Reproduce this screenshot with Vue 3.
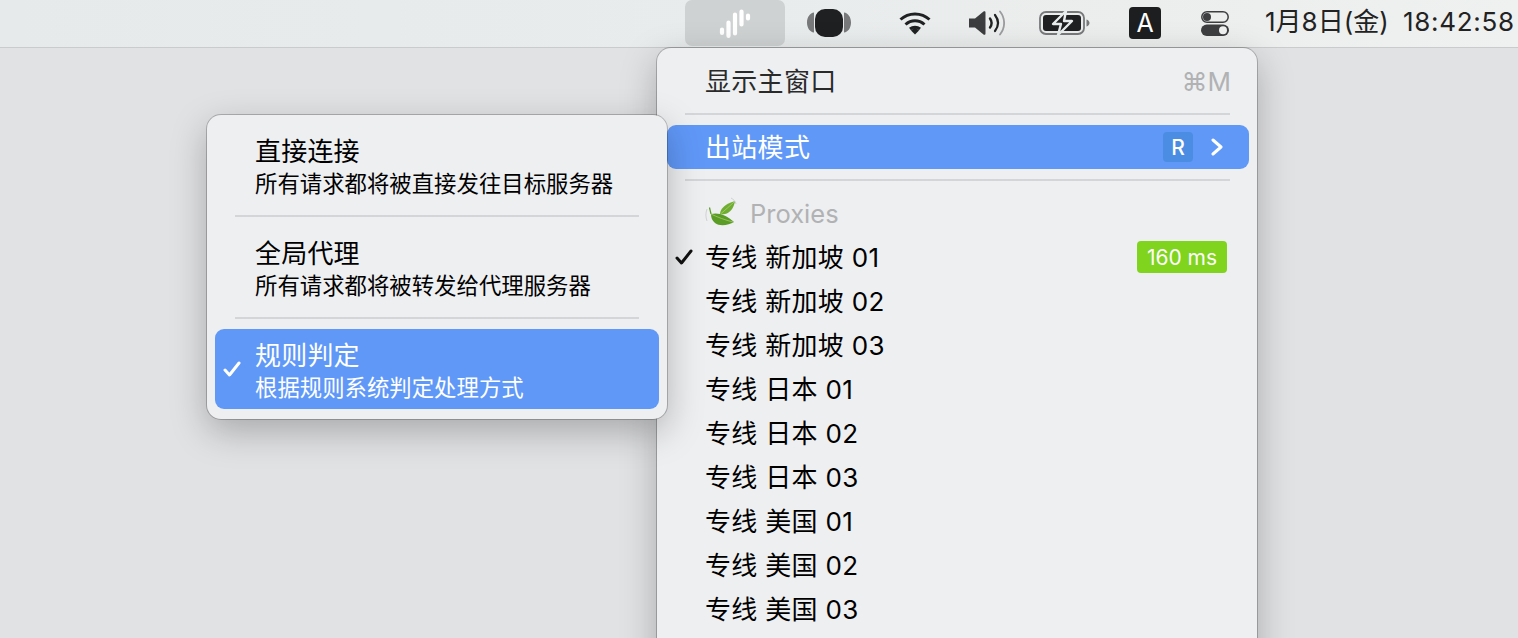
<script setup>
const proxies = [
  { name: '专线 新加坡 01', checked: true, ping: '160 ms' },
  { name: '专线 新加坡 02' },
  { name: '专线 新加坡 03' },
  { name: '专线 日本 01' },
  { name: '专线 日本 02' },
  { name: '专线 日本 03' },
  { name: '专线 美国 01' },
  { name: '专线 美国 02' },
  { name: '专线 美国 03' }
]

const modes = [
  { title: '直接连接', desc: '所有请求都将被直接发往目标服务器' },
  { title: '全局代理', desc: '所有请求都将被转发给代理服务器' },
  { title: '规则判定', desc: '根据规则系统判定处理方式', active: true }
]
</script>

<template>
  <div class="screen">
    <header class="menubar">
      <div class="tray-app">
        <svg width="32" height="31" viewBox="0 0 32 31" fill="none" stroke="#fff" stroke-linecap="round" stroke-width="4.200">
          <path d="M3 21.500v3.500M9.500 14.500v13.500M16 6.500v19M22.500 3.500v13M29 7.500v3" />
        </svg>
      </div>
      <svg class="ico-headset" width="44" height="30" viewBox="0 0 44 30">
        <path d="M7 4.500v20C3 24 0 20 0 14.500S3 5 7 4.500zM37 4.500v20c4-.5 7-4.500 7-10S41 5 37 4.500z" fill="#77797a" />
        <rect x="8" y="1" width="28" height="28" rx="10" fill="#1f2021" />
      </svg>
      <svg class="ico-wifi" width="32" height="26" viewBox="0 0 32 26" fill="none" stroke="#202122" stroke-width="3">
        <path d="M1.500 9.500C9.500 2 22.500 2 30.500 9.500M6.500 14.500c5.500-5 13.500-5 19 0M11 19c3-2.500 7-2.500 10 0" />
        <path d="M12 20.500 16 17l4 3.500-4 4z" fill="#202122" stroke="none" />
      </svg>
      <svg class="ico-volume" width="36" height="28" viewBox="0 0 36 28" fill="none">
        <path d="M0 9.500h6L14.500 2.500c1.200-.8 2-.2 2 1v21c0 1.200-.8 1.800-2 1L6 18.500H0z" fill="#3c3d3e" />
        <path d="M21 9.500c2 2.800 2 6.200 0 9" stroke="#202122" stroke-width="2.400" stroke-linecap="round" />
        <path d="M26 6c3.800 5 3.800 11 0 16" stroke="#202122" stroke-width="2.200" stroke-linecap="round" />
        <path d="M31 2.500c5.500 7 5.500 16 0 23" stroke="#9a9c9d" stroke-width="1.800" stroke-linecap="round" />
      </svg>
      <svg class="ico-battery" width="51" height="28" viewBox="0 0 51 28">
        <rect x="1" y="3" width="44" height="22" rx="6" fill="none" stroke="#77797a" stroke-width="1.800" />
        <rect x="4" y="6" width="38" height="16" rx="3" fill="#1f2021" />
        <path d="M47.500 10.500c2 .6 3 2 3 3.500s-1 2.900-3 3.500z" fill="#77797a" />
        <path d="M27 2 14 15h8l-3 11 14-14h-8z" fill="#1f2021" stroke="#e9ecec" stroke-width="2.400" stroke-linejoin="round" />
      </svg>
      <div class="input-badge">A</div>
      <svg class="ico-switch" width="28" height="25" viewBox="0 0 28 25">
        <rect x=".8" y=".8" width="26.400" height="10.400" rx="5.200" fill="none" stroke="#3d3e3f" stroke-width="1.500" />
        <circle cx="6" cy="6" r="4" fill="#3d3e3f" />
        <rect y="13.500" width="28" height="11.500" rx="5.750" fill="#3d3e3f" />
        <circle cx="22" cy="19.250" r="4" fill="#f0f1f1" />
      </svg>
      <span class="date">1月8日(金)</span>
      <span class="time">18:42:58</span>
    </header>

    <section class="menu menu-main">
      <div class="row">
        <span class="label dim">显示主窗口</span>
        <span class="shortcut">⌘M</span>
      </div>
      <div class="sep"></div>
      <div class="row row-active">
        <span class="label">出站模式</span>
        <span class="key">R</span>
        <svg class="chevron" width="12" height="18" viewBox="0 0 12 18" fill="none" stroke="#fff" stroke-width="3" stroke-linecap="round" stroke-linejoin="round">
          <path d="M2 2l8 7-8 7" />
        </svg>
      </div>
      <div class="sep"></div>
      <div class="row row-group">
        <svg class="leaf" width="32" height="32" viewBox="0 0 32 32">
          <path d="M15 17c0-5 5-10 15-13-1 7-5 12-10 13-2 .4-3.500.4-5 0z" fill="#6fae32" />
          <path d="M15.500 17C20 13 25 9 29.500 4.500" stroke="#a8d068" stroke-width=".8" fill="none" />
          <path d="M6 17c7-2 16 1 23 8-5 3-14 5-19 1-3-2.500-4-5.500-4-9z" fill="#5b9c27" />
          <path d="M6 17c6 3 14 6 22 8" stroke="#a2cb66" stroke-width=".8" fill="none" />
          <path d="M6 17 4.500 10.500" stroke="#5b9c27" stroke-width="1.200" fill="none" />
          <path d="M2 24c-1.500-4-1.500-8 0-12M26 1c2.500 1.500 4.500 3 5 6" stroke="#cfd1d2" stroke-width="1" fill="none" />
        </svg>
        <span class="group-name">Proxies</span>
      </div>
      <div v-for="p in proxies" :key="p.name" class="row">
        <svg v-if="p.checked" class="check" width="18" height="16" viewBox="0 0 18 16" fill="none" stroke="#111" stroke-width="3" stroke-linecap="round" stroke-linejoin="round">
          <path d="M2 9l4.500 5L16 2" />
        </svg>
        <span class="label">{{ p.name }}</span>
        <span v-if="p.ping" class="ping">{{ p.ping }}</span>
      </div>
    </section>

    <section class="menu menu-sub">
      <template v-for="(m, i) in modes" :key="m.title">
        <div v-if="i > 0" class="sep"></div>
        <div class="mode" :class="{ 'row-active': m.active }">
          <svg v-if="m.active" class="check" width="18" height="16" viewBox="0 0 18 16" fill="none" stroke="#fff" stroke-width="3" stroke-linecap="round" stroke-linejoin="round">
            <path d="M2 9l4.500 5L16 2" />
          </svg>
          <div class="mode-title">{{ m.title }}</div>
          <div class="mode-desc">{{ m.desc }}</div>
        </div>
      </template>
    </section>
  </div>
</template>

<style>
html, body {
  margin: 0;
  overflow: hidden;
}
</style>

<style scoped>
.screen {
  position: relative;
  height: 638px;
  overflow: hidden;
  background: #e1e2e4;
  font-family: Inter, "Noto Sans CJK SC", "Noto Sans", sans-serif;
  color: #000;
}

.menubar {
  display: flex;
  align-items: center;
  height: 46px;
  padding: 0 0 1px 685px;
  background: linear-gradient(90deg, #e6eaea 0%, #e9ecec 50%, #eff0f0 100%);
  border-bottom: 1px solid #c9cbcc;
}

.tray-app {
  display: flex;
  align-items: center;
  justify-content: center;
  width: 100px;
  height: 46px;
  border-radius: 7px;
  background: #cfd2d2;
  flex: none;
}

.menubar svg { flex: none; }
.ico-headset { margin-left: 22px; }
.ico-wifi { margin-left: 48px; }
.ico-volume { margin-left: 38px; }
.ico-battery { margin-left: 34px; }
.ico-switch { margin-left: 40px; }

.input-badge {
  flex: none;
  width: 32px;
  height: 32px;
  margin-left: 39px;
  border-radius: 4px;
  background: #1d1e1f;
  color: #fff;
  font-size: 25px;
  line-height: 32px;
  text-align: center;
}

.date,
.time {
  flex: none;
  font-size: 26px;
  line-height: 30px;
  color: #222;
  white-space: nowrap;
  margin-bottom: 2px;
}

.date {
  width: 138px;
  margin-left: 36px;
}

.time { letter-spacing: .7px; }

.menu {
  position: absolute;
  box-sizing: border-box;
  background: #eeeff1;
  border-radius: 14px;
  box-shadow: 0 0 0 1px rgba(0, 0, 0, .22), 0 12px 36px rgba(0, 0, 0, .26);
}

/* runs past the bottom of the window, like the real menu */
.menu-main {
  left: 657px;
  top: 48px;
  width: 600px;
  height: 640px;
  padding: 11px 8px 0 10px;
}

.menu-sub {
  left: 207px;
  top: 115px;
  width: 460px;
  height: 304px;
  padding: 10px 8px;
}

.sep {
  height: 2px;
  background: #d4d5d8;
  margin: 10px 20px;
}

.menu-main .sep {
  margin: 10px 19px 10px 18px;
}

.row {
  position: relative;
  display: flex;
  align-items: center;
  height: 44px;
  padding-left: 38px;
  border-radius: 9px;
  font-size: 26px;
  line-height: 30px;
}

.label,
.group-name,
.shortcut {
  padding-top: 2px;
}

.label {
  flex: 1;
  letter-spacing: .3px;
  white-space: nowrap;
}

.dim { color: #2a2a2b; }

.row-active {
  background: #6098f8;
  color: #fff;
}

.shortcut {
  margin-right: 18px;
  color: #b1b2b4;
  font-size: 26px;
}

.key {
  width: 30px;
  height: 30px;
  margin-right: 18px;
  border-radius: 4px;
  background: #4b8de2;
  color: #fff;
  font-size: 21px;
  font-weight: 500;
  line-height: 32px;
  text-align: center;
}

.chevron { margin-right: 26px; }

.row-group { gap: 13px; }

.group-name {
  color: #b1b2b4;
  font-size: 25.500px;
}

.check {
  position: absolute;
  left: 8px;
  top: 50%;
  margin-top: -8px;
}

.ping {
  width: 90px;
  height: 32px;
  margin-right: 22px;
  border-radius: 4px;
  background: #80d41e;
  color: #fff;
  font-size: 21px;
  line-height: 34px;
  text-align: center;
}

.mode {
  position: relative;
  box-sizing: border-box;
  height: 80px;
  padding: 10px 0 0 40px;
  border-radius: 9px;
}

.mode-title {
  font-size: 26px;
  line-height: 34px;
  letter-spacing: .2px;
}

.mode-desc {
  font-size: 22.400px;
  line-height: 30px;
  white-space: nowrap;
}
</style>
